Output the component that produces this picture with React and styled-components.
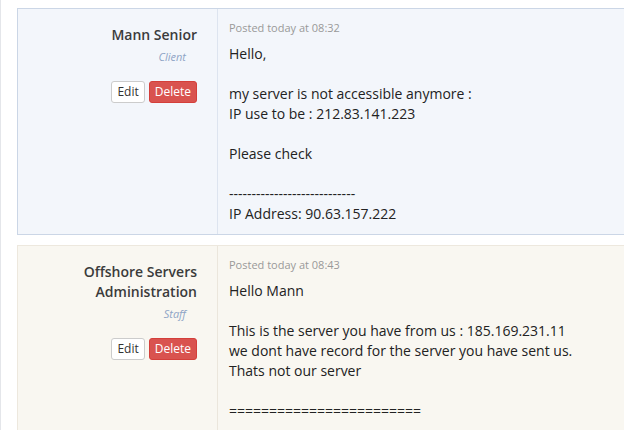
import React from 'react';
import styled, { createGlobalStyle } from 'styled-components';

const GlobalStyle = createGlobalStyle`
    html, body {
        margin: 0;
        padding: 0;
        background: #ffffff;
        overflow: hidden;
    }
    body {
        font-family: "Open Sans", "Liberation Sans", sans-serif;
        color: #333;
    }
`;

const Page = styled.div`
    width: 624px;
    height: 430px;
    padding: 8px 0 0 16px;
    box-sizing: border-box;
    border-left: 1px solid #e4e6ea;
    overflow: hidden;
`;

const Reply = styled.div`
    display: flex;
    margin: 0 -8px 10px 0;
    background: ${p => p.staff ? '#f9f7f1' : '#f3f6fb'};
    border: 1px solid ${p => p.staff ? '#ede8de' : '#cbd6e6'};
`;

const Author = styled.div`
    width: 200px;
    flex-shrink: 0;
    padding: 16px 20px 12px 0;
    box-sizing: border-box;
    text-align: right;
    border-right: 1px solid ${p => p.staff ? '#ebe6dc' : '#dde4ef'};
`;

const Name = styled.div`
    font-size: 14px;
    font-weight: 600;
    line-height: 20px;
    color: #3b3b3b;
`;

const Role = styled.div`
    font-size: 11px;
    font-style: italic;
    line-height: 16px;
    color: #8fa5c6;
    margin: 4px 11px 0 0;
`;

const Actions = styled.div`
    display: flex;
    justify-content: flex-end;
    gap: 4px;
    margin-top: 16px;
`;

const Button = styled.button`
    font-family: "Open Sans", "Liberation Sans", sans-serif;
    font-size: 12px;
    line-height: 20px;
    padding: 0 5px;
    border-radius: 3px;
    cursor: pointer;
    border: 1px solid ${p => p.danger ? '#d43f3a' : '#cccccc'};
    background: ${p => p.danger ? '#d9534f' : '#ffffff'};
    color: ${p => p.danger ? '#ffffff' : '#333333'};
`;

const Body = styled.div`
    flex: 1;
    padding: 11px 11px 10px 11px;
`;

const Posted = styled.div`
    font-size: 11px;
    line-height: 16px;
    color: #999;
`;

const Message = styled.div`
    margin-top: 8px;
    font-size: 14px;
    line-height: 20px;
    color: #222;
    white-space: pre-line;
`;

const replies = [
    {
        author: 'Mann Senior',
        role: 'Client',
        posted: 'Posted today at 08:32',
        text: 'Hello,\n\nmy server is not accessible anymore :\nIP use to be : 212.83.141.223\n\nPlease check\n\n----------------------------\nIP Address: 90.63.157.222',
    },
    {
        author: ['Offshore Servers', 'Administration'],
        role: 'Staff',
        staff: true,
        posted: 'Posted today at 08:43',
        text: 'Hello Mann\n\nThis is the server you have from us : 185.169.231.11\nwe dont have record for the server you have sent us.\nThats not our server\n\n========================',
    },
];

function App() {
    return (
        <>
            <GlobalStyle />
            <Page>
                {replies.map((r, i) => (
                    <Reply key={i} staff={r.staff}>
                        <Author staff={r.staff}>
                            {[].concat(r.author).map(line => <Name key={line}>{line}</Name>)}
                            <Role>{r.role}</Role>
                            <Actions>
                                <Button>Edit</Button>
                                <Button danger>Delete</Button>
                            </Actions>
                        </Author>
                        <Body>
                            <Posted>{r.posted}</Posted>
                            <Message>{r.text}</Message>
                        </Body>
                    </Reply>
                ))}
            </Page>
        </>
    );
}

export default App;
